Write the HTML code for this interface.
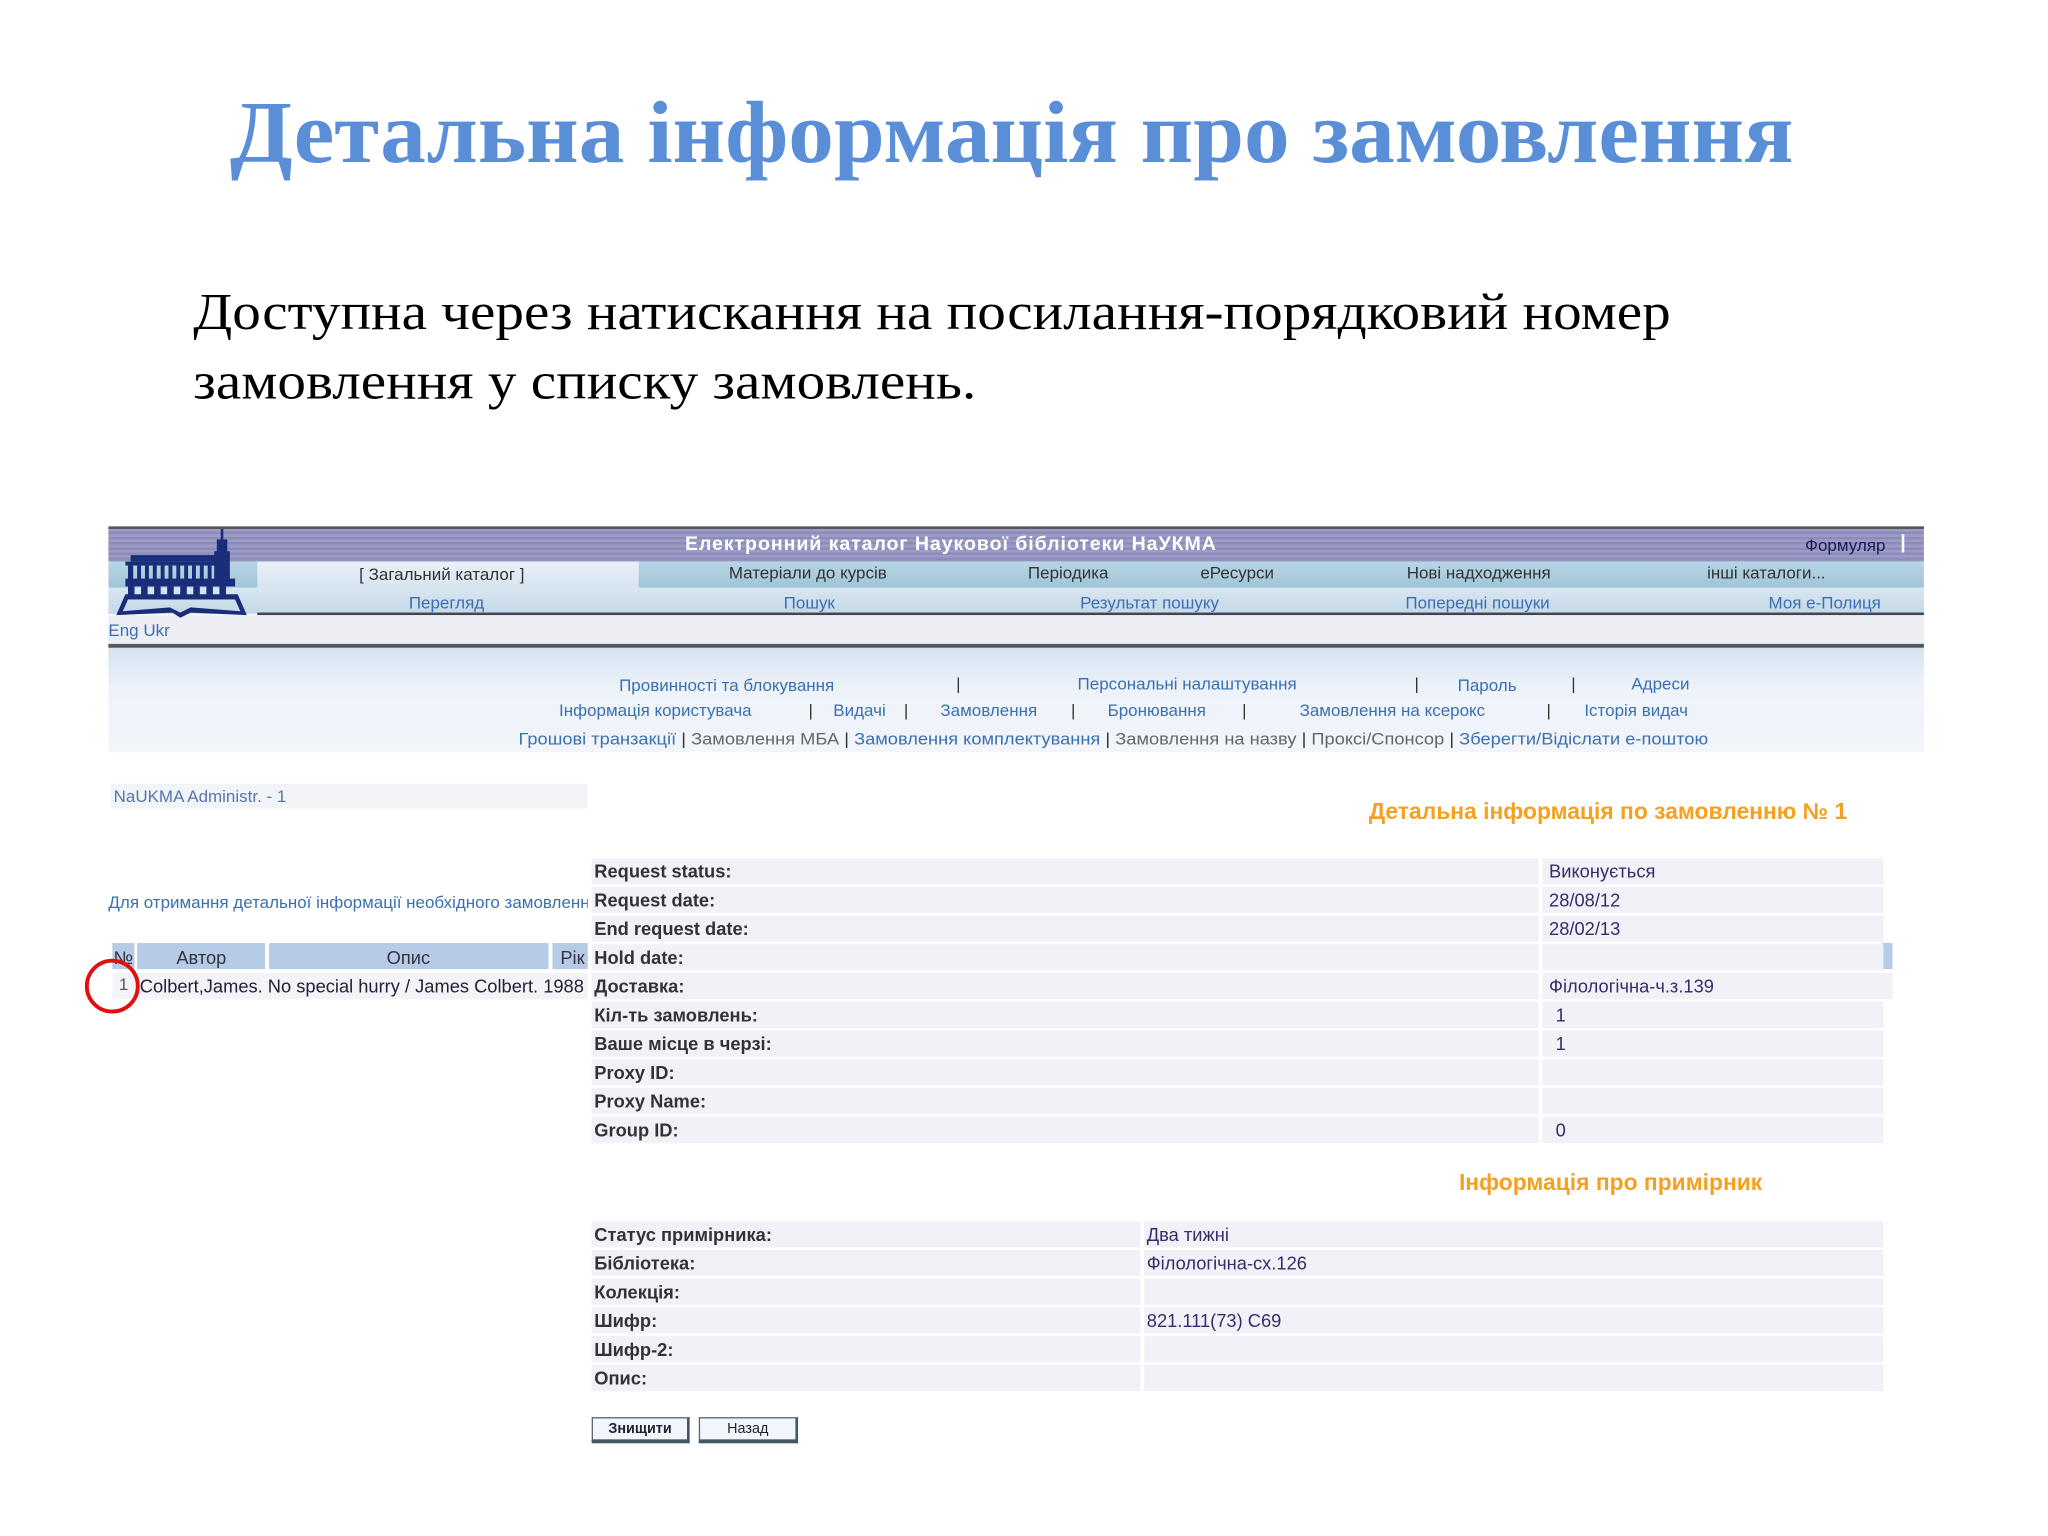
<!DOCTYPE html>
<html><head><meta charset="utf-8"><style>
html,body{margin:0;padding:0;background:#fff;overflow:hidden}
#w{position:absolute;left:0;top:0;width:1568px;height:1176px;transform:scale(1.306122);transform-origin:0 0;background:#fff}
.a{position:absolute;white-space:nowrap}
.n{font-family:"Liberation Sans",sans-serif;font-size:13px;line-height:16px}
.lk{color:#3a6fb0}
.gr{color:#666}
.nav{color:#333}
.t{font-family:"Liberation Sans",sans-serif;font-size:14px;line-height:20px}
.lab{font-weight:bold;color:#333}
.val{color:#3a2a6a}
.row{position:absolute;height:20px;background:#f1f2f7}
.btn{position:absolute;height:16px;border:1px solid #567;border-bottom:3px solid #456;border-right:2px solid #456;background:#f2f6fa;font-family:"Liberation Sans",sans-serif;font-size:11px;line-height:16px;text-align:center;color:#223}
</style></head><body><div id="w">
<div class="a" style="left:176px;top:62px;font-family:'Liberation Serif',serif;font-weight:bold;font-size:67px;line-height:80px;color:#5a8fd8;transform:scaleX(1.043);transform-origin:0 0">Детальна інформація про замовлення</div>
<div class="a" style="left:148px;top:212px;font-family:'Liberation Serif',serif;font-size:40px;line-height:53px;color:#000;transform:scaleX(1.094);transform-origin:0 0">Доступна через натискання на посилання-порядковий номер<br>замовлення у списку замовлень.</div>

<!-- header -->
<div class="a" style="left:83px;top:403px;width:1390px;height:2px;background:#555"></div>
<div class="a" style="left:83px;top:405px;width:1390px;height:25px;background:repeating-linear-gradient(#9c9cc6 0 2px,#8c8cba 2px 4px)"></div>
<div class="a" style="left:83px;top:430px;width:1390px;height:20px;background:linear-gradient(#b8d6e4,#9fc4d8)"></div>
<div class="a" style="left:197px;top:430px;width:292px;height:20px;background:linear-gradient(#eaf1f8,#d6e4f0)"></div>
<div class="a" style="left:83px;top:450px;width:1390px;height:20px;background:linear-gradient(#d8e6f0,#c4d8e8)"></div>
<div class="a" style="left:197px;top:469px;width:1276px;height:2px;background:#445"></div>
<div class="a" style="left:83px;top:471px;width:1390px;height:23px;background:#eceef4"></div>
<div class="a" style="left:83px;top:493px;width:1390px;height:3px;background:#555"></div>
<div class="a" style="left:83px;top:496px;width:1390px;height:80px;background:linear-gradient(#d4e2f0,#eef3fa 40%,#f2f5fa)"></div>
<svg class="a" style="left:88px;top:405px" width="102" height="68" viewBox="0 0 102 68">
<g fill="#1a2d7a">
<rect x="81" y="0" width="2" height="8"/><rect x="78" y="8" width="8" height="10"/><rect x="76" y="17" width="12" height="22"/>
<rect x="12" y="20" width="66" height="5"/><rect x="8" y="25" width="70" height="3"/>
<rect x="10" y="28" width="4" height="14"/><rect x="17" y="28" width="3" height="14"/><rect x="23" y="28" width="3" height="14"/><rect x="29" y="28" width="3" height="14"/><rect x="35" y="28" width="3" height="14"/><rect x="41" y="28" width="3" height="14"/><rect x="47" y="28" width="3" height="14"/><rect x="53" y="28" width="3" height="14"/><rect x="59" y="28" width="3" height="14"/><rect x="65" y="28" width="3" height="14"/><rect x="71" y="28" width="3" height="14"/>
<rect x="8" y="38" width="84" height="6"/>
<rect x="10" y="44" width="5" height="8"/><rect x="20" y="44" width="5" height="8"/><rect x="30" y="44" width="5" height="8"/><rect x="40" y="44" width="5" height="8"/><rect x="50" y="44" width="5" height="8"/><rect x="60" y="44" width="5" height="8"/><rect x="70" y="44" width="5" height="8"/><rect x="80" y="44" width="5" height="8"/>
<path d="M8 50 L94 50 L101 66 L58 64 L50 68 L44 64 L1 66 Z M10 54 L6 63 L42 60 L50 64 L58 60 L96 63 L92 54 Z"/>
</g></svg>
<div class="a" style="left:83px;top:408px;width:1290px;text-align:center;font-family:'Liberation Sans',sans-serif;font-weight:bold;font-size:15px;letter-spacing:0.7px;color:#fff">Електронний каталог Наукової бібліотеки НаУКМА</div>
<div class="a n" style="left:1382px;top:410px;color:#1a1a5a">Формуляр</div>
<div class="a" style="left:1456px;top:409px;width:2px;height:14px;background:#fff"></div>
<div class="a n nav" style="left:275px;top:432px;font-size:13px">[ Загальний каталог ]</div>
<div class="a n nav" style="left:558px;top:431px">Матеріали до курсів</div>
<div class="a n nav" style="left:787px;top:431px">Періодика</div>
<div class="a n nav" style="left:919px;top:431px">еРесурси</div>
<div class="a n nav" style="left:1077px;top:431px">Нові надходження</div>
<div class="a n nav" style="left:1307px;top:431px">інші каталоги...</div>
<div class="a n lk" style="left:313px;top:454px">Перегляд</div>
<div class="a n lk" style="left:600px;top:454px">Пошук</div>
<div class="a n lk" style="left:827px;top:454px">Результат пошуку</div>
<div class="a n lk" style="left:1076px;top:454px">Попередні пошуки</div>
<div class="a n lk" style="left:1354px;top:454px">Моя е-Полиця</div>
<div class="a n lk" style="left:83px;top:475px">Eng Ukr</div>

<div class="a n lk" style="left:474px;top:517px">Провинності та блокування</div>
<div class="a n nav" style="left:732px;top:516px">|</div>
<div class="a n lk" style="left:825px;top:516px">Персональні налаштування</div>
<div class="a n nav" style="left:1083px;top:516px">|</div>
<div class="a n lk" style="left:1116px;top:517px">Пароль</div>
<div class="a n nav" style="left:1203px;top:516px">|</div>
<div class="a n lk" style="left:1249px;top:516px">Адреси</div>
<div class="a n lk" style="left:428px;top:536px">Інформація користувача</div>
<div class="a n nav" style="left:619px;top:536px">|</div>
<div class="a n lk" style="left:638px;top:536px">Видачі</div>
<div class="a n nav" style="left:692px;top:536px">|</div>
<div class="a n lk" style="left:720px;top:536px">Замовлення</div>
<div class="a n nav" style="left:820px;top:536px">|</div>
<div class="a n lk" style="left:848px;top:536px">Бронювання</div>
<div class="a n nav" style="left:951px;top:536px">|</div>
<div class="a n lk" style="left:995px;top:536px">Замовлення на ксерокс</div>
<div class="a n nav" style="left:1184px;top:536px">|</div>
<div class="a n lk" style="left:1213px;top:536px">Історія видач</div>
<div class="a n" style="left:397px;top:558px;font-size:13px;transform:scaleX(1.075);transform-origin:0 0"><span class="lk">Грошові транзакції</span> <span class="nav">|</span> <span class="gr">Замовлення МБА</span> <span class="nav">|</span> <span class="lk">Замовлення комплектування</span> <span class="nav">|</span> <span class="gr">Замовлення на назву</span> <span class="nav">|</span> <span class="gr">Проксі/Спонсор</span> <span class="nav">|</span> <span class="lk">Зберегти/Відіслати е-поштою</span></div>

<!-- left -->
<div class="a" style="left:85px;top:600px;width:365px;height:19px;background:#f3f4f8"></div>
<div class="a n lk" style="left:87px;top:602px;color:#5577aa">NaUKMA Administr. - 1</div>
<div class="a n lk" style="left:83px;top:683px;width:367px;overflow:hidden">Для отримання детальної інформації необхідного замовлення</div>
<div class="a" style="left:86px;top:722px;width:17px;height:20px;background:#b6cce6"></div>
<div class="a" style="left:105px;top:722px;width:98px;height:20px;background:#b6cce6"></div>
<div class="a" style="left:206px;top:722px;width:214px;height:20px;background:#b6cce6"></div>
<div class="a" style="left:423px;top:722px;width:27px;height:20px;background:#b6cce6"></div>
<div class="a" style="left:1441px;top:722px;width:8px;height:20px;background:#b6cce6"></div>
<div class="a t" style="left:87px;top:723px;color:#334;font-size:14px">№</div>
<div class="a t" style="left:135px;top:723px;color:#334;font-size:14px">Автор</div>
<div class="a t" style="left:296px;top:723px;color:#334;font-size:14px">Опис</div>
<div class="a t" style="left:429px;top:723px;color:#334;font-size:14px">Рік</div>
<div class="a" style="left:86px;top:745px;width:364px;height:20px;background:#f3f4f8"></div>
<div class="a t" style="left:91px;top:744px;color:#556;font-size:13px">1</div>
<div class="a t" style="left:107px;top:745px;width:343px;overflow:hidden;color:#223;font-size:14px">Colbert,James. No special hurry / James Colbert. 1988</div>
<div class="a" style="left:65px;top:734px;width:42px;height:42px;border:3px solid #e01010;border-radius:50%;box-sizing:border-box"></div>

<!-- right -->
<div class="a" style="left:1048px;top:611px;font-family:'Liberation Sans',sans-serif;font-weight:bold;font-size:17.5px;color:#f5a020">Детальна інформація по замовленню № 1</div>
<div class="row" style="left:453px;top:657px;width:725px"></div><div class="row" style="left:1181px;top:657px;width:261px"></div>
<div class="row" style="left:453px;top:679px;width:725px"></div><div class="row" style="left:1181px;top:679px;width:261px"></div>
<div class="row" style="left:453px;top:701px;width:725px"></div><div class="row" style="left:1181px;top:701px;width:261px"></div>
<div class="row" style="left:453px;top:723px;width:725px"></div><div class="row" style="left:1181px;top:723px;width:261px"></div>
<div class="row" style="left:453px;top:745px;width:725px"></div><div class="row" style="left:1181px;top:745px;width:268px"></div>
<div class="row" style="left:453px;top:767px;width:725px"></div><div class="row" style="left:1181px;top:767px;width:261px"></div>
<div class="row" style="left:453px;top:789px;width:725px"></div><div class="row" style="left:1181px;top:789px;width:261px"></div>
<div class="row" style="left:453px;top:811px;width:725px"></div><div class="row" style="left:1181px;top:811px;width:261px"></div>
<div class="row" style="left:453px;top:833px;width:725px"></div><div class="row" style="left:1181px;top:833px;width:261px"></div>
<div class="row" style="left:453px;top:855px;width:725px"></div><div class="row" style="left:1181px;top:855px;width:261px"></div>
<div class="a t lab" style="left:455px;top:657px">Request status:</div>
<div class="a t lab" style="left:455px;top:679px">Request date:</div>
<div class="a t lab" style="left:455px;top:701px">End request date:</div>
<div class="a t lab" style="left:455px;top:723px">Hold date:</div>
<div class="a t lab" style="left:455px;top:745px">Доставка:</div>
<div class="a t lab" style="left:455px;top:767px">Кіл-ть замовлень:</div>
<div class="a t lab" style="left:455px;top:789px">Ваше місце в черзі:</div>
<div class="a t lab" style="left:455px;top:811px">Proxy ID:</div>
<div class="a t lab" style="left:455px;top:833px">Proxy Name:</div>
<div class="a t lab" style="left:455px;top:855px">Group ID:</div>
<div class="a t val" style="left:1186px;top:657px;font-size:14px">Виконується</div>
<div class="a t val" style="left:1186px;top:679px;font-size:14px">28/08/12</div>
<div class="a t val" style="left:1186px;top:701px;font-size:14px">28/02/13</div>
<div class="a t val" style="left:1186px;top:745px;font-size:14px">Філологічна-ч.з.139</div>
<div class="a t val" style="left:1191px;top:767px;font-size:14px">1</div>
<div class="a t val" style="left:1191px;top:789px;font-size:14px">1</div>
<div class="a t val" style="left:1191px;top:855px;font-size:14px">0</div>

<div class="a" style="left:1117px;top:895px;font-family:'Liberation Sans',sans-serif;font-weight:bold;font-size:17.5px;color:#f5a020">Інформація про примірник</div>
<div class="row" style="left:453px;top:935px;width:420px"></div><div class="row" style="left:876px;top:935px;width:566px"></div>
<div class="row" style="left:453px;top:957px;width:420px"></div><div class="row" style="left:876px;top:957px;width:566px"></div>
<div class="row" style="left:453px;top:979px;width:420px"></div><div class="row" style="left:876px;top:979px;width:566px"></div>
<div class="row" style="left:453px;top:1001px;width:420px"></div><div class="row" style="left:876px;top:1001px;width:566px"></div>
<div class="row" style="left:453px;top:1023px;width:420px"></div><div class="row" style="left:876px;top:1023px;width:566px"></div>
<div class="row" style="left:453px;top:1045px;width:420px"></div><div class="row" style="left:876px;top:1045px;width:566px"></div>
<div class="a t lab" style="left:455px;top:935px">Статус примірника:</div>
<div class="a t lab" style="left:455px;top:957px">Бібліотека:</div>
<div class="a t lab" style="left:455px;top:979px">Колекція:</div>
<div class="a t lab" style="left:455px;top:1001px">Шифр:</div>
<div class="a t lab" style="left:455px;top:1023px">Шифр-2:</div>
<div class="a t lab" style="left:455px;top:1045px">Опис:</div>
<div class="a t val" style="left:878px;top:935px;font-size:14px">Два тижні</div>
<div class="a t val" style="left:878px;top:957px;font-size:14px">Філологічна-сх.126</div>
<div class="a t val" style="left:878px;top:1001px;font-size:14px">821.111(73) C69</div>
<div class="btn" style="left:453px;top:1085px;width:72px;font-weight:bold">Знищити</div>
<div class="btn" style="left:535px;top:1085px;width:73px">Назад</div>
</div></body></html>
